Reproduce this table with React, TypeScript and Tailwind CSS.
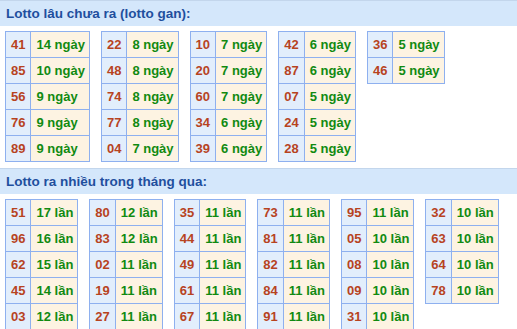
const GAN: [string, string][][] = [
  [["41", "14"], ["85", "10"], ["56", "9"], ["76", "9"], ["89", "9"]],
  [["22", "8"], ["48", "8"], ["74", "8"], ["77", "8"], ["04", "7"]],
  [["10", "7"], ["20", "7"], ["60", "7"], ["34", "6"], ["39", "6"]],
  [["42", "6"], ["87", "6"], ["07", "5"], ["24", "5"], ["28", "5"]],
  [["36", "5"], ["46", "5"]],
];

const NHIEU: [string, string][][] = [
  [["51", "17"], ["96", "16"], ["62", "15"], ["45", "14"], ["03", "12"]],
  [["80", "12"], ["83", "12"], ["02", "11"], ["19", "11"], ["27", "11"]],
  [["35", "11"], ["44", "11"], ["49", "11"], ["61", "11"], ["67", "11"]],
  [["73", "11"], ["81", "11"], ["82", "11"], ["84", "11"], ["91", "11"]],
  [["95", "11"], ["05", "10"], ["08", "10"], ["09", "10"], ["31", "10"]],
  [["32", "10"], ["63", "10"], ["64", "10"], ["78", "10"]],
];

function Header({ title }: { title: string }) {
  return (
    <div className="flex h-[26px] items-center border-t border-[#c3d6ec] bg-[#d4e7fb] pl-[6px] text-[13.5px] font-bold text-[#1f4f9e]">
      {title}
    </div>
  );
}

function LottoTable({ rows, unit }: { rows: [string, string][]; unit: string }) {
  return (
    <table className="self-start border-collapse border border-[#8eb0ef]">
      <tbody>
        {rows.map(([num, count]) => (
          <tr key={num} className="h-[26px]">
            <td className="border border-[#8eb0ef] bg-[#e2eefc] px-[5px] text-center text-[#b7431f]">{num}</td>
            <td className="border border-[#8eb0ef] bg-[#fdf3e2] pl-[5px] pr-[4px] text-left text-[#118a11]">
              {count} {unit}
            </td>
          </tr>
        ))}
      </tbody>
    </table>
  );
}

export default function App() {
  return (
    <div className="h-[329px] w-[517px] overflow-hidden bg-white font-['Liberation_Sans',Arial,sans-serif] text-[13px] font-bold leading-none">
      <Header title="Lotto lâu chưa ra (lotto gan):" />
      <div className="flex gap-[11px] px-[5px] pt-[5px]">
        {GAN.map((t, i) => (
          <LottoTable key={i} rows={t} unit="ngày" />
        ))}
      </div>
      <div className="mt-[6px]">
        <Header title="Lotto ra nhiều trong tháng qua:" />
      </div>
      <div className="flex gap-[11px] px-[5px] pt-[5px]">
        {NHIEU.map((t, i) => (
          <LottoTable key={i} rows={t} unit="lần" />
        ))}
      </div>
    </div>
  );
}
